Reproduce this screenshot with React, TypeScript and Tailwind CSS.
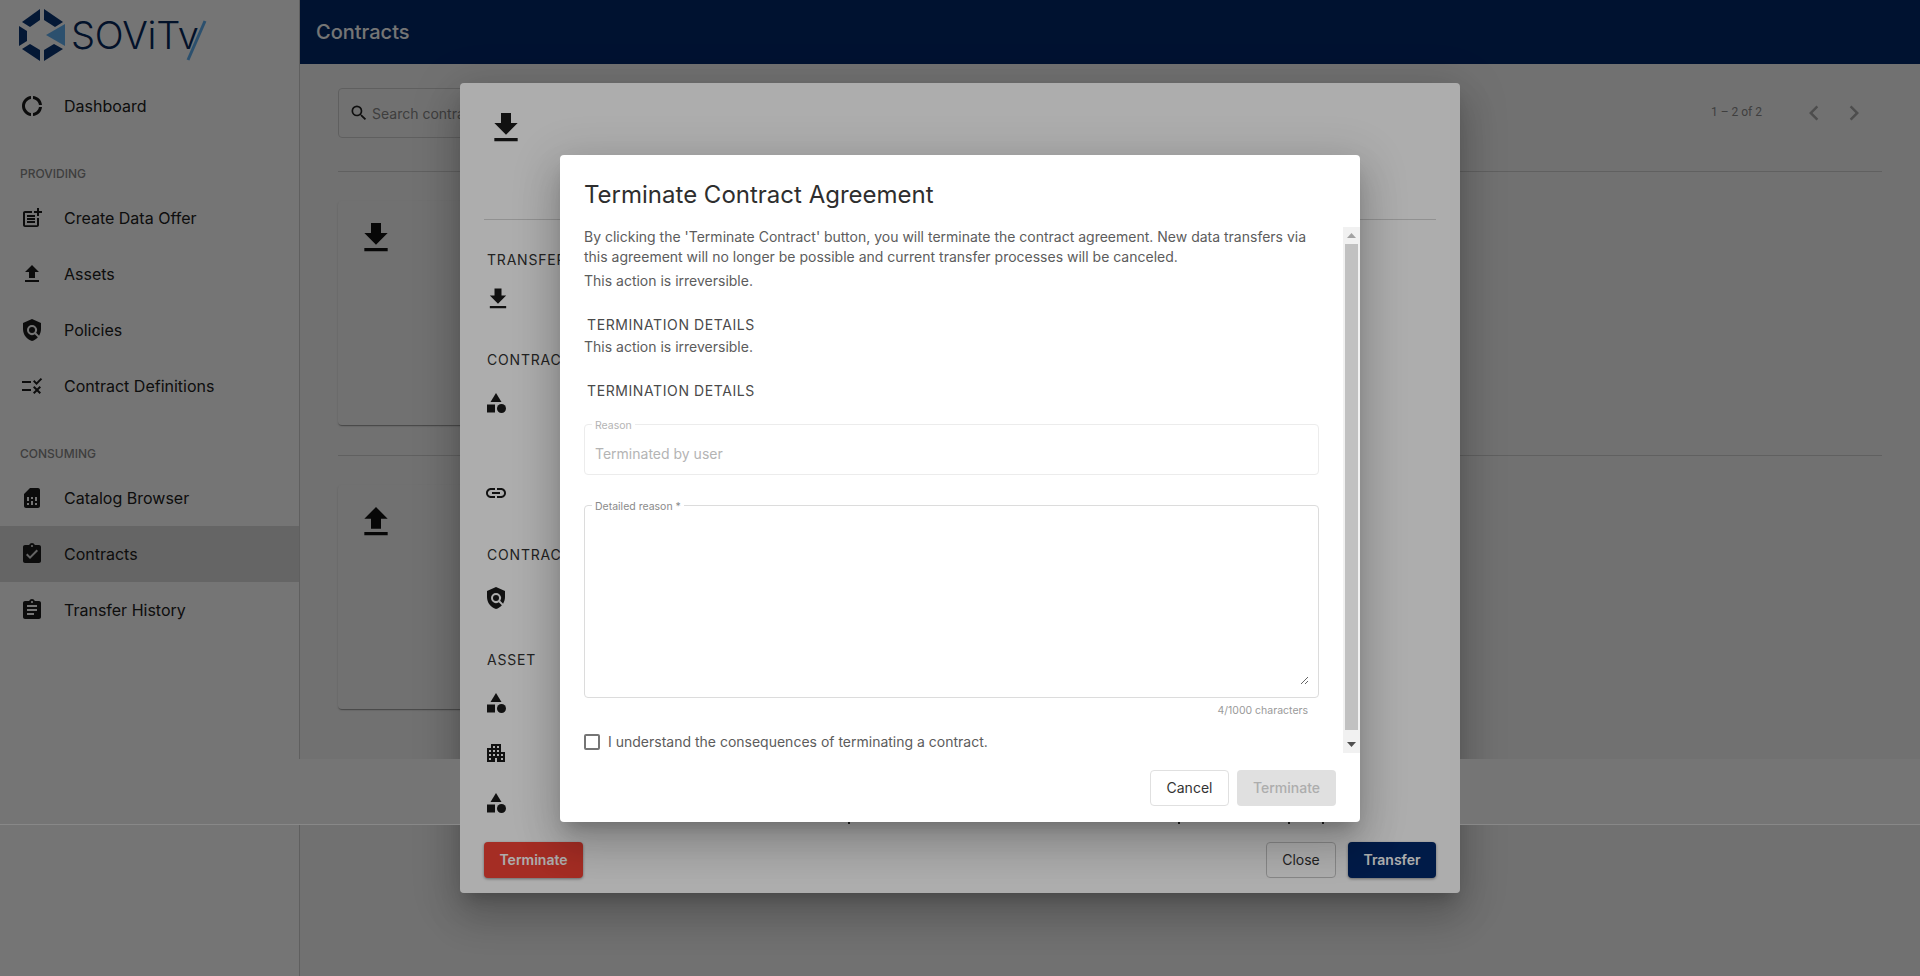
import React from "react";
import {
  MdDonutLarge, MdPostAdd, MdFileUpload, MdFileDownload, MdPolicy, MdRule, MdSimCard,
  MdAssignmentTurnedIn, MdAssignment, MdSearch, MdChevronLeft, MdChevronRight,
  MdCategory, MdLink, MdApartment,
} from "react-icons/md";

function Logo() {
  return (
    <svg width="220" height="64" viewBox="0 0 220 64" className="block">
      <g fill="#0a3575">
        <polygon points="22,22 40,9 40,20 30,27" />
        <polygon points="44,9 63,22 55,27 44,20" />
        <polygon points="19,26 27,31 27,41 19,46" />
        <polygon points="22,49 30,44 40,50 40,61" />
        <polygon points="44,61 44,50 54,44 63,49" />
      </g>
      <polygon points="46,35 65,24 65,46" fill="#62b0f0" />
      <text x="71" y="49" fontFamily="Inter, sans-serif" fontWeight="300" fontSize="38" fill="#06285c" textLength="128" lengthAdjust="spacing">SOViTv</text>
      <line x1="205" y1="21" x2="188" y2="60" stroke="#62b0f0" strokeWidth="3" />
    </svg>
  );
}

function NavItem({ icon, label, active }: { icon: React.ReactNode; label: string; active?: boolean }) {
  return (
    <div className={active ? "flex h-14 items-center bg-[#dcdcdc] pl-5 text-[#212121]" : "flex h-14 items-center pl-5 text-[#212121]"}>
      <span className="flex w-11 text-[24px] text-[#1c1c1c]">{icon}</span>
      <span className="text-base">{label}</span>
    </div>
  );
}

function NavLabel({ children }: { children: string }) {
  return (
    <div className="flex h-14 items-end pb-2 pl-5 text-xs font-medium leading-4 text-[#888888]">{children}</div>
  );
}

function Sidebar() {
  return (
    <aside className="flex h-full w-[300px] shrink-0 flex-col border-r border-[#cfcfcf] bg-white">
      <div className="h-[78px]"><Logo /></div>
      <NavItem icon={<MdDonutLarge />} label="Dashboard" />
      <NavLabel>PROVIDING</NavLabel>
      <NavItem icon={<MdPostAdd />} label="Create Data Offer" />
      <NavItem icon={<MdFileUpload />} label="Assets" />
      <NavItem icon={<MdPolicy />} label="Policies" />
      <NavItem icon={<MdRule />} label="Contract Definitions" />
      <NavLabel>CONSUMING</NavLabel>
      <NavItem icon={<MdSimCard />} label="Catalog Browser" />
      <NavItem icon={<MdAssignmentTurnedIn />} label="Contracts" active />
      <NavItem icon={<MdAssignment />} label="Transfer History" />
    </aside>
  );
}

function Card({ icon }: { icon: React.ReactNode }) {
  return (
    <div className="h-[224px] w-[700px] rounded bg-[#f7f7f7] pl-[18px] pt-[17px] text-[40px] text-[#111111] shadow-[0_2px_1px_-1px_rgba(0,0,0,0.2),0_1px_1px_0_rgba(0,0,0,0.14),0_1px_3px_0_rgba(0,0,0,0.12)]">
      {icon}
    </div>
  );
}

function Main() {
  return (
    <main className="flex min-w-0 flex-1 flex-col bg-[#f7f7f7]">
      <header className="flex h-16 shrink-0 items-center bg-[#00286a] pl-4 text-xl font-medium text-white">Contracts</header>
      <div className="flex flex-col px-[38px] pt-6">
        <div className="flex h-[50px] items-center justify-between">
          <div className="flex h-[50px] w-[340px] items-center gap-[3px] rounded border border-[#d0d0d0] pl-[10px] text-sm text-[#888888]">
            <MdSearch className="text-[20px] text-[#222222]" />
            <span className="pt-[2px]">Search contracts</span>
          </div>
          <div className="flex items-center pr-[13px] text-[#a8a8a8]">
            <span className="mr-[37px] -translate-y-[1px] font-[Roboto,sans-serif] text-xs text-[#8a8a8a]">1 – 2 of 2</span>
            <MdChevronLeft className="text-[30px]" />
            <MdChevronRight className="ml-[10px] text-[30px]" />
          </div>
        </div>
        <div className="mt-[33px] h-px bg-[#d2d2d2]" />
        <div className="mt-[29px]"><Card icon={<MdFileDownload />} /></div>
        <div className="mt-[30px] h-px bg-[#d2d2d2]" />
        <div className="mt-[29px]"><Card icon={<MdFileUpload />} /></div>
      </div>
    </main>
  );
}

const SHADOW = "shadow-[0_11px_15px_-7px_rgba(0,0,0,0.2),0_24px_38px_3px_rgba(0,0,0,0.14),0_9px_46px_8px_rgba(0,0,0,0.12)]";

function DetailDialog() {
  return (
    <div className="absolute left-[460px] top-[83px] flex h-[810px] w-[1000px] flex-col rounded bg-white px-6 text-[#1a1a1a]">
      <div className="h-[137px] shrink-0 border-b border-[#d6d6d6] pl-[2px] pt-[25px] text-[40px]"><MdFileDownload /></div>
      <div className="flex flex-col text-sm tracking-[0.8px] text-[#333333]">
        <div className="mt-[30px] h-5 pl-[3px] leading-5">TRANSFER PROCESS</div>
        <MdFileDownload className="mt-[15px] text-[28px] text-[#1a1a1a]" />
        <div className="mt-[37px] h-5 pl-[3px] leading-5">CONTRACT AGREEMENT</div>
        <MdCategory className="mt-[21px] text-[24px] text-[#1a1a1a]" />
        <MdLink className="mt-[66px] text-[24px] text-[#1a1a1a]" />
        <div className="mt-[40px] h-5 pl-[3px] leading-5">CONTRACT POLICY</div>
        <MdPolicy className="mt-[21px] text-[24px] text-[#1a1a1a]" />
        <div className="mt-[40px] h-5 pl-[3px] leading-5">ASSET</div>
        <MdCategory className="mt-[21px] text-[24px] text-[#1a1a1a]" />
        <MdApartment className="mt-[26px] text-[24px] text-[#1a1a1a]" />
        <MdCategory className="mt-[26px] text-[24px] text-[#1a1a1a]" />
      </div>
      <span className="absolute left-[388px] top-[739px] h-[2px] w-[2px] bg-[#333333]" />
      <span className="absolute left-[718px] top-[739px] h-[2px] w-[2px] bg-[#333333]" />
      <span className="absolute left-[828px] top-[739px] h-[2px] w-[2px] bg-[#333333]" />
      <span className="absolute left-[862px] top-[739px] h-[2px] w-[2px] bg-[#333333]" />
      <div className="mt-auto mb-[15px] flex items-center justify-between text-sm">
        <button className="h-9 w-[99px] rounded bg-[#f44336] font-semibold text-white shadow-[0_1px_3px_rgba(0,0,0,0.4)]">Terminate</button>
        <div className="flex gap-3">
          <button className="h-9 w-[70px] rounded border border-[#c8c8c8] text-[#333333]">Close</button>
          <button className="h-9 w-[88px] rounded bg-[#00286a] font-semibold text-white shadow-[0_1px_3px_rgba(0,0,0,0.4)]">Transfer</button>
        </div>
      </div>
    </div>
  );
}

function Scrollbar() {
  return (
    <div className="flex w-[17px] shrink-0 flex-col items-center bg-[#f1f1f1]">
      <div className="flex h-[17px] items-center justify-center">
        <svg width="9" height="5" viewBox="0 0 9 5"><polygon points="4.5,0 9,5 0,5" fill="#a3a3a3" /></svg>
      </div>
      <div className="h-[486px] w-[13px] bg-[#c1c1c1]" />
      <div className="mt-[6px] flex h-[17px] items-center justify-center">
        <svg width="9" height="5" viewBox="0 0 9 5"><polygon points="0,0 9,0 4.5,5" fill="#505050" /></svg>
      </div>
    </div>
  );
}

function TerminateDialog() {
  return (
    <div className={`absolute left-[560px] top-[155px] flex h-[667px] w-[800px] flex-col rounded bg-white ${SHADOW}`}>
      <div className="flex h-[72px] shrink-0 items-center pl-6 pt-[8px] text-2xl font-normal text-[#2e2e2e]">Terminate Contract Agreement</div>
      <div className="flex h-[526px] shrink-0">
        <div className="flex w-[783px] flex-col overflow-hidden pl-6 pr-[24px] text-sm leading-5 text-[#5c5c5c]">
          <p>By clicking the 'Terminate Contract' button, you will terminate the contract agreement. New data transfers via this agreement will no longer be possible and current transfer processes will be canceled.</p>
          <p className="mt-1">This action is irreversible.</p>
          <div className="mt-6 pl-[3px] tracking-[0.6px] text-[#4a4a4a]">TERMINATION DETAILS</div>
          <p className="mt-[2px]">This action is irreversible.</p>
          <div className="mt-6 pl-[3px] tracking-[0.6px] text-[#4a4a4a]">TERMINATION DETAILS</div>
          <fieldset className="mt-4 h-[58px] shrink-0 rounded border border-[#ececec] px-[7px]">
            <legend className="translate-y-[2px] px-[3px] text-[10.5px] leading-[14px] text-[#b4b4b4]">Reason</legend>
            <div className="pl-[3px] pt-[13px] text-sm text-[#b4b4b4]">Terminated by user</div>
          </fieldset>
          <fieldset className="mt-[23px] h-[200px] shrink-0 rounded border border-[#dcdcdc] pl-[7px] pr-[9px]">
            <legend className="translate-y-[2px] px-[3px] text-[10.5px] leading-[14px] text-[#8a8a8a]">Detailed reason *</legend>
            <textarea className="ml-[3px] mt-[7px] block h-[166px] w-[714px] resize-y bg-transparent outline-none" />
          </fieldset>
          <div className="mt-[6px] w-[724px] text-right text-[10.5px] leading-[14px] text-[#9a9a9a]">4/1000 characters</div>
          <label className="mt-[14px] flex h-5 items-center gap-2">
            <input type="checkbox" className="h-4 w-4 appearance-none rounded-[2px] border-2 border-[#757575]" />
            <span>I understand the consequences of terminating a contract.</span>
          </label>
        </div>
        <Scrollbar />
      </div>
      <div className="mt-[17px] flex justify-end gap-2 pr-6 text-sm">
        <button className="h-9 w-[79px] rounded border border-[#e0e0e0] text-[#333333]">Cancel</button>
        <button disabled className="h-9 w-[99px] rounded bg-[#e0e0e0] font-medium text-[#adadad]">Terminate</button>
      </div>
    </div>
  );
}

export default function App() {
  return (
    <div className="relative h-[976px] w-[1920px] overflow-hidden bg-white font-[Inter,sans-serif]">
      <div className="flex h-full">
        <Sidebar />
        <Main />
      </div>
      <div className="absolute inset-0 bg-black/32" />
      <div className={`absolute left-[460px] top-[83px] h-[810px] w-[1000px] rounded ${SHADOW}`} />
      <div className="absolute inset-x-0 top-[759px] h-[66px] border-b border-[#c9c9c9] bg-[#adadad]" />
      <DetailDialog />
      <div className="absolute inset-0 bg-black/32" />
      <TerminateDialog />
    </div>
  );
}
